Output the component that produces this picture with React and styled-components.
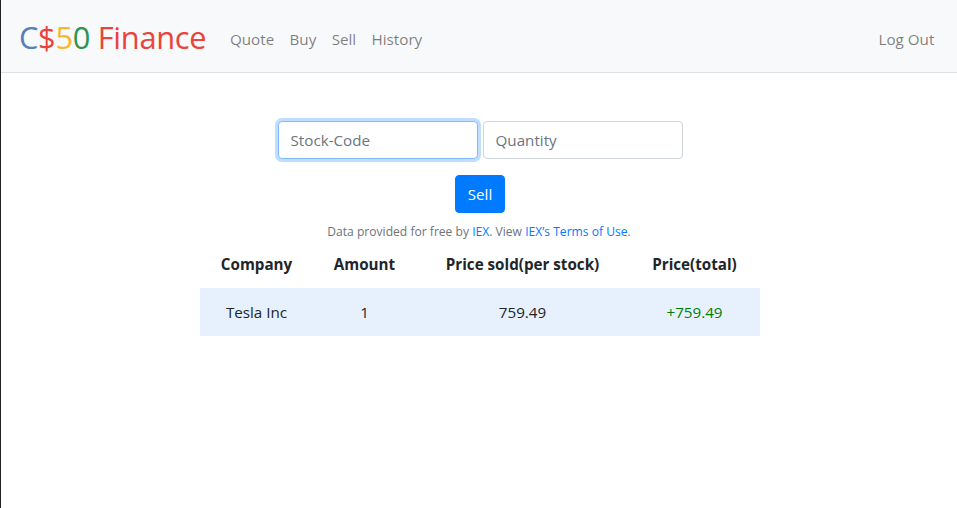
import React from 'react'
import styled, { createGlobalStyle } from 'styled-components'

const GlobalStyle = createGlobalStyle`
  html, body {
    margin: 0;
    padding: 0;
    background: #fff;
  }
  body {
    font-family: "Open Sans", "Noto Sans", sans-serif;
    font-size: 15.2px;
    line-height: 1.5;
    color: #212529;
    border-left: 1px solid #222;
    min-height: 508px;
  }
  * {
    box-sizing: border-box;
  }
`

const NavbarStyled = styled.nav`
  display: flex;
  align-items: center;
  height: 73px;
  padding: 7px 15px 0 18px;
  background: #f8f9fa;
  border-bottom: 1px solid #dee2e6;
`

const Brand = styled.a`
  font-size: 30.8px;
  line-height: 1;
  margin-right: 16px;
  padding-bottom: 4px;
  text-decoration: none;
  letter-spacing: -0.3px;
`

const BrandPart = styled.span`
  color: ${props => props.color};
`

const NavList = styled.ul`
  display: flex;
  list-style-type: none;
  margin: 0;
  padding: 0;
  flex: ${props => (props.grow ? 1 : 'none')};
`

const NavLink = styled.a`
  display: block;
  padding: 8px 7.7px;
  color: rgba(0, 0, 0, 0.5);
  text-decoration: none;
`

const Main = styled.main`
  display: flex;
  flex-direction: column;
  align-items: center;
  padding-top: 48px;
`

const Form = styled.form`
  display: flex;
  flex-direction: column;
  align-items: center;
`

const InputRow = styled.div`
  display: flex;
  gap: 5px;
  margin-bottom: 16px;
  padding-left: 2px;
`

const Input = styled.input`
  width: 200px;
  height: 38px;
  padding: 6px 12px;
  font-family: inherit;
  font-size: 15.2px;
  color: #495057;
  background: #fff;
  border: 1px solid ${props => (props.focused ? '#80bdff' : '#ced4da')};
  border-radius: 4px;
  outline: none;
  box-shadow: ${props => (props.focused ? '0 0 0 3px rgba(0, 123, 255, 0.25)' : 'none')};

  &::placeholder {
    color: #6c757d;
  }
`

const Button = styled.button`
  height: 38px;
  width: 50px;
  padding: 0;
  font-family: inherit;
  font-size: 15.2px;
  color: #fff;
  background: #007bff;
  border: 1px solid #007bff;
  border-radius: 4px;
  margin-left: 2px;
`

const Footnote = styled.p`
  margin: 10px 0 0 0;
  font-size: 12.1px;
  line-height: 18px;
  color: #6c757d;

  a {
    color: #007bff;
    text-decoration: none;
  }
`

const Table = styled.table`
  width: 560px;
  margin-left: 1px;
  border-collapse: collapse;
  table-layout: fixed;

  th, td {
    padding: 0 12px;
    text-align: center;
    vertical-align: middle;
  }

  th {
    font-weight: 700;
    height: 47px;
  }

  td {
    height: 48px;
  }
`

const Row = styled.tr`
  background: #e7f1fd;
`

const Cell = styled.td`
  color: ${props => props.color || '#212529'};
`

export default function App() {
  return (
    <>
      <GlobalStyle />
      <NavbarStyled>
        <Brand href="#">
          <BrandPart color="#537fbe">C</BrandPart>
          <BrandPart color="#ea433b">$</BrandPart>
          <BrandPart color="#f5b82e">5</BrandPart>
          <BrandPart color="#2e944b">0</BrandPart>{' '}
          <BrandPart color="#ea433b">Finance</BrandPart>
        </Brand>
        <NavList grow>
          <li><NavLink href="#">Quote</NavLink></li>
          <li><NavLink href="#">Buy</NavLink></li>
          <li><NavLink href="#">Sell</NavLink></li>
          <li><NavLink href="#">History</NavLink></li>
        </NavList>
        <NavList>
          <li><NavLink href="#">Log Out</NavLink></li>
        </NavList>
      </NavbarStyled>
      <Main>
        <Form>
          <InputRow>
            <Input focused placeholder="Stock-Code" />
            <Input placeholder="Quantity" />
          </InputRow>
          <Button type="button">Sell</Button>
        </Form>
        <Footnote>
          Data provided for free by <a href="#">IEX</a>. View <a href="#">IEX’s Terms of Use</a>.
        </Footnote>
        <Table>
          <colgroup>
            <col style={{ width: 114 }} />
            <col style={{ width: 102 }} />
            <col style={{ width: 214 }} />
            <col style={{ width: 130 }} />
          </colgroup>
          <thead>
            <tr>
              <th>Company</th>
              <th>Amount</th>
              <th>Price sold(per stock)</th>
              <th>Price(total)</th>
            </tr>
          </thead>
          <tbody>
            <Row>
              <Cell>Tesla Inc</Cell>
              <Cell>1</Cell>
              <Cell>759.49</Cell>
              <Cell color="green">+759.49</Cell>
            </Row>
          </tbody>
        </Table>
      </Main>
    </>
  )
}
